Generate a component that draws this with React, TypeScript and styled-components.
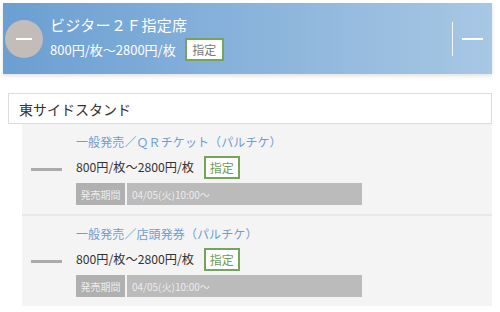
import styled, { createGlobalStyle } from "styled-components";

const GlobalStyle = createGlobalStyle`
	body {
		margin: 0;
		background: #fff;
		font-family: "Noto Sans CJK JP", "Noto Sans", sans-serif;
		color: #333;
	}
`;

interface ticketProps {
	title: string;
	price: string;
	period: string;
}

const Page = styled.div`
	width: 500px;
	padding: 3px 8px 0 3px;
	box-sizing: border-box;
`;

const Header = styled.div`
	height: 71px;
	display: flex;
	align-items: center;
	background: linear-gradient(to right, #6b9fd2, #a7c7e4);
	box-shadow: 0 2px 4px rgba(0, 0, 0, 0.12);
	color: #fff;
`;

const Circle = styled.div`
	width: 38px;
	height: 38px;
	margin-left: 2px;
	border-radius: 50%;
	background: #c3bdb9;
	display: flex;
	align-items: center;
	justify-content: center;
	flex-shrink: 0;

	&::after {
		content: "";
		width: 16px;
		height: 2px;
		background: #fff;
	}
`;

const HeaderBody = styled.div`
	flex: 1;
	margin-left: 7px;
	display: flex;
	flex-direction: column;
	gap: 3px;
	margin-top: -1px;
`;

const HeaderTitle = styled.div`
	font-size: 15px;
	line-height: 20px;
	letter-spacing: 0.3px;
`;

const PriceRow = styled.div<{ $gap: number }>`
	display: flex;
	align-items: center;
	gap: ${(p) => p.$gap}px;
`;

const Price = styled.span<{ $light?: boolean }>`
	font-size: ${(p) => (p.$light ? "13px" : "12.2px")};
	line-height: 23px;
	color: ${(p) => (p.$light ? "#fff" : "#333")};
`;

const Badge = styled.span<{ $wide?: boolean }>`
	box-sizing: border-box;
	height: 23px;
	width: ${(p) => (p.$wide ? "39px" : "36px")};
	border: 2px solid #77a45d;
	background: #fff;
	color: ${(p) => (p.$wide ? "#777" : "#6e9a57")};
	font-size: 12px;
	display: flex;
	align-items: center;
	justify-content: center;
`;

const Toggle = styled.div`
	display: flex;
	align-items: center;
	margin-right: 9px;

	&::before {
		content: "";
		width: 1px;
		height: 34px;
		background: rgba(255, 255, 255, 0.85);
		margin-right: 9px;
	}

	&::after {
		content: "";
		width: 21px;
		height: 2px;
		background: #fff;
	}
`;

const Section = styled.div`
	margin: 19px 0 0 5px;
`;

const SectionHead = styled.div`
	height: 31px;
	box-sizing: border-box;
	border: 1px solid #dcdcdc;
	padding-left: 10px;
	display: flex;
	align-items: center;
	font-size: 14px;
	color: #333;
`;

const List = styled.div`
	margin-left: 14px;
	background: #f4f4f4;
`;

const Item = styled.div`
	display: flex;
	align-items: center;
	padding: 9px 0;
	border-bottom: 2px solid #e8e8e8;

	&:last-child {
		border-bottom: 0;
	}
`;

const Dash = styled.div`
	width: 31px;
	height: 3px;
	background: #ababab;
	margin: 0 14px 0 9px;
`;

const ItemBody = styled.div`
	display: flex;
	flex-direction: column;
`;

const ItemTitle = styled.div`
	font-size: 12px;
	line-height: 18px;
	color: #6f9ed1;
	margin-bottom: 5px;
	letter-spacing: 0.1px;
`;

const Period = styled.div`
	margin-top: 4px;
	display: flex;
	height: 22px;
	width: 286px;
	font-size: 10px;
	color: #ececec;
`;

const PeriodLabel = styled.div`
	width: 49px;
	background: #b0b0b0;
	display: flex;
	align-items: center;
	justify-content: center;
	margin-right: 2px;
`;

const PeriodValue = styled.div`
	flex: 1;
	background: #bbbbbb;
	display: flex;
	align-items: center;
	padding-left: 5px;
`;

const Ticket = ({ title, price, period }: ticketProps) => (
	<Item>
		<Dash />
		<ItemBody>
			<ItemTitle>{title}</ItemTitle>
			<PriceRow $gap={10}>
				<Price>{price}</Price>
				<Badge>指定</Badge>
			</PriceRow>
			<Period>
				<PeriodLabel>発売期間</PeriodLabel>
				<PeriodValue>{period}</PeriodValue>
			</Period>
		</ItemBody>
	</Item>
);

const tickets = [
	{ title: "一般発売／ＱＲチケット（パルチケ）", price: "800円/枚〜2800円/枚", period: "04/05(火)10:00〜" },
	{ title: "一般発売／店頭発券（パルチケ）", price: "800円/枚〜2800円/枚", period: "04/05(火)10:00〜" },
];

const App = () => {
	return (
		<>
			<GlobalStyle />
			<Page>
				<Header>
					<Circle />
					<HeaderBody>
						<HeaderTitle>ビジター２Ｆ指定席</HeaderTitle>
						<PriceRow $gap={9}>
							<Price $light>800円/枚〜2800円/枚</Price>
							<Badge $wide>指定</Badge>
						</PriceRow>
					</HeaderBody>
					<Toggle />
				</Header>
				<Section>
					<SectionHead>東サイドスタンド</SectionHead>
					<List>
						{tickets.map((t, i) => (
							<Ticket key={i + "ticket"} {...t} />
						))}
					</List>
				</Section>
			</Page>
		</>
	);
};

export default App;
